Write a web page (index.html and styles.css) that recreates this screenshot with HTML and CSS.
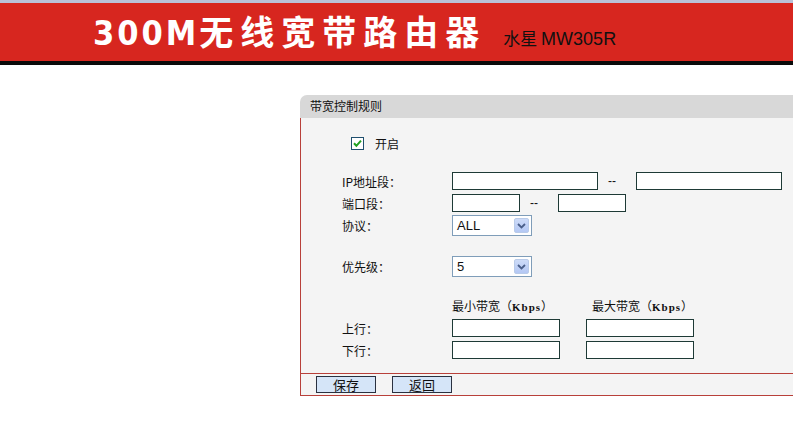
FILE: index.html
```html
<!DOCTYPE html>
<html lang="zh-CN">
<head>
<meta charset="utf-8">
<title>带宽控制规则</title>
<link rel="stylesheet" href="styles.css">
</head>
<body>
<div class="top-strip"></div>
<header class="banner">
  <h1 class="title"><span class="num">300M</span><span class="cjk">无线宽带路由器</span></h1>
  <span class="model">水星 <span class="lat">MW305R</span></span>
</header>
<div class="banner-bottom"></div>

<section class="panel">
  <div class="panel-head">带宽控制规则</div>
  <div class="panel-body">
    <div class="row row-check">
      <span class="cb"><svg width="9" height="9" viewBox="0 0 9 9"><path d="M1 4.2 L3.4 6.8 L8 1.6" fill="none" stroke="#21a121" stroke-width="2"/></svg></span>
      <span class="cb-label">开启</span>
    </div>
    <div class="row row-field">
      <span class="lbl">IP地址段：</span>
      <span class="in w146"></span><span class="dash">--</span><span class="in w146"></span>
    </div>
    <div class="row row-field">
      <span class="lbl">端口段：</span>
      <span class="in w68"></span><span class="dash">--</span><span class="in w68"></span>
    </div>
    <div class="row row-sel">
      <span class="lbl">协议：</span>
      <span class="sel"><span class="sel-text">ALL</span><span class="sel-btn"><svg width="9" height="6" viewBox="0 0 9 6"><path d="M1 1 L4.5 4.5 L8 1" fill="none" stroke="#4a5f8a" stroke-width="1.8"/></svg></span></span>
    </div>
    <div class="row row-sel row-prio">
      <span class="lbl">优先级：</span>
      <span class="sel"><span class="sel-text">5</span><span class="sel-btn"><svg width="9" height="6" viewBox="0 0 9 6"><path d="M1 1 L4.5 4.5 L8 1" fill="none" stroke="#4a5f8a" stroke-width="1.8"/></svg></span></span>
    </div>
    <div class="row row-heads">
      <span class="lbl"></span>
      <span class="head">最小带宽（<span class="kb">Kbps</span>）</span>
      <span class="head">最大带宽（<span class="kb">Kbps</span>）</span>
    </div>
    <div class="row row-field row-up">
      <span class="lbl">上行：</span>
      <span class="in w108"></span><span class="in w108 gap26"></span>
    </div>
    <div class="row row-field">
      <span class="lbl">下行：</span>
      <span class="in w108"></span><span class="in w108 gap26"></span>
    </div>
  </div>
  <div class="panel-foot">
    <span class="btn">保存</span>
    <span class="btn">返回</span>
  </div>
</section>
</body>
</html>
```

FILE: styles.css
```css
html, body {
  margin: 0;
  padding: 0;
  background: #ffffff;
  overflow: hidden;
}
body {
  width: 793px;
  height: 440px;
  font-family: "Noto Sans CJK SC", "Liberation Sans", sans-serif;
  font-size: 12px;
  color: #111;
}
.top-strip {
  height: 3px;
  background: #bac1d8;
}
.banner {
  height: 58px;
  background: #d7261f;
  display: flex;
  align-items: baseline;
  padding-left: 93px;
  box-sizing: border-box;
  line-height: 56px;
}
.title {
  margin: 0;
  font-size: 34px;
  font-weight: bold;
  color: #fff;
  font-family: "Noto Sans CJK SC", sans-serif;
}
.title .num {
  letter-spacing: 3px;
  font-family: "DejaVu Sans Condensed", "Liberation Sans", sans-serif;
}
.title .cjk {
  letter-spacing: 7px;
}
.model {
  margin-left: 17px;
  font-size: 17px;
  color: #111;
  font-family: "Noto Sans CJK SC", sans-serif;
}
.model .lat {
  font-family: "Liberation Sans", sans-serif;
  font-size: 18px;
}
.banner-bottom {
  height: 4px;
  background: #0a0a0a;
}

.panel {
  margin-top: 30px;
  margin-left: 300px;
  width: 520px;
}
.panel-head {
  height: 23px;
  line-height: 22px;
  background: #d8d8d8;
  border-top-left-radius: 7px;
  padding-left: 10px;
  font-size: 12px;
  color: #111;
}
.panel-body {
  background: #f4f4f4;
  border-left: 1px solid #b8403a;
  padding-bottom: 12px;
  border-bottom: 1px solid #b8403a;
}
.row {
  display: flex;
  align-items: center;
  padding-left: 41px;
}
.row-check {
  height: 50px;
  padding-bottom: 2px;
  padding-left: 50px;
}
.cb {
  width: 11px;
  height: 11px;
  border: 1px solid #1f4f6e;
  background: #fff;
  display: flex;
  align-items: center;
  justify-content: center;
}
.cb-label {
  margin-left: 11px;
}
.lbl {
  width: 110px;
  flex: none;
}
.row-field {
  height: 22px;
}
.in {
  height: 16px;
  border: 1px solid #1e3a36;
  background: #fff;
  flex: none;
}
.w146 { width: 144px; }
.w68 { width: 66px; }
.w108 { width: 106px; }
.gap26 { margin-left: 26px; }
.dash {
  width: 28px;
  padding-left: 10px;
  flex: none;
  font-family: "Liberation Sans", sans-serif;
  font-size: 12px;
}
.row-sel {
  height: 23px;
}
.row-prio {
  margin-top: 18px;
}
.sel {
  width: 78px;
  height: 19px;
  border: 1px solid #7f9db9;
  background: #fff;
  display: flex;
  align-items: center;
  justify-content: space-between;
}
.sel-text {
  padding-left: 4px;
  font-family: "Liberation Sans", sans-serif;
  font-size: 13px;
}
.sel-btn {
  width: 15px;
  height: 15px;
  margin-right: 2px;
  background: linear-gradient(#cddbf8, #b4c8f4);
  border: 1px solid #b9cbe9;
  border-radius: 2px;
  display: flex;
  align-items: center;
  justify-content: center;
  box-sizing: border-box;
}
.row-heads {
  height: 16px;
  margin-top: 19px;
}
.head {
  width: 140px;
  flex: none;
}
.kb {
  font-family: "Liberation Serif", serif;
  font-size: 11px;
  letter-spacing: 1px;
  font-weight: bold;
}
.row-up {
  margin-top: 4px;
}
.panel-foot {
  height: 21px;
  border-left: 1px solid #b8403a;
  border-bottom: 1px solid #b8403a;
  background: #f4f4f4;
  display: flex;
  align-items: center;
  padding-left: 15px;
  gap: 16px;
}
.btn {
  width: 58px;
  height: 15px;
  border: 1px solid #2a3140;
  background: #d5e5f8;
  font-size: 13px;
  line-height: 15px;
  text-align: center;
  color: #111;
}
```
